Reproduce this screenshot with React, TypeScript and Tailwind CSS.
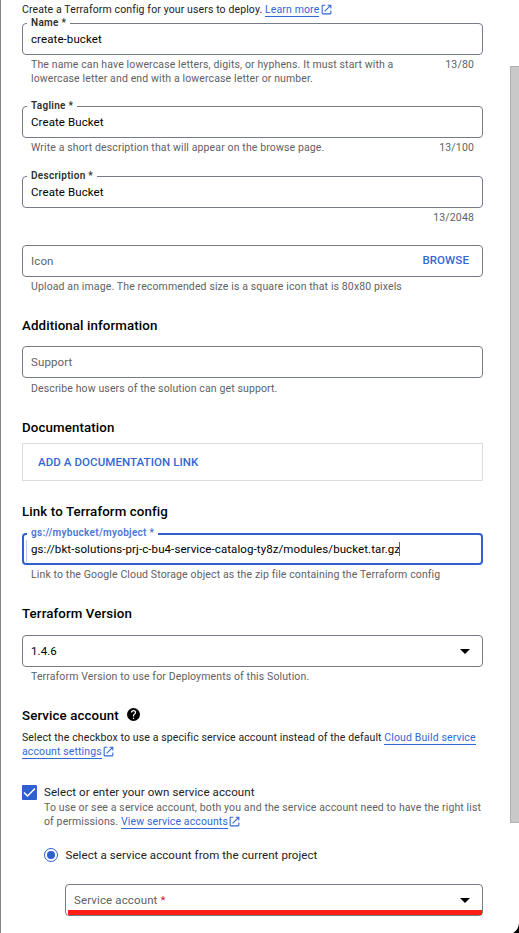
import type { ReactNode } from "react";

function ExternalIcon() {
  return (
    <svg viewBox="0 0 24 24" className="-mt-px ml-[0.5px] inline-block h-[13px] w-[13px] shrink-0 fill-[#3367d6]">
      <path d="M19 19H5V5h5V3H5a2 2 0 0 0-2 2v14a2 2 0 0 0 2 2h14c1.100 0 2-.9 2-2v-5h-2v5zM14 3v2h3.590l-9.830 9.830 1.410 1.410L19 6.410V10h2V3h-7z" />
    </svg>
  );
}

function Link({ children }: { children: ReactNode }) {
  return <a className="inline-block h-[14px] border-b border-[#3367d6] leading-[13px] text-[#3367d6]">{children}</a>;
}

function Heading({ children, className }: { children: ReactNode; className: string }) {
  return (
    <h2 className={`flex h-[18px] items-center pt-[2px] text-[13.3px] font-medium tracking-[0.11px] text-black ${className}`}>
      {children}
    </h2>
  );
}

function Value({ children }: { children: ReactNode }) {
  return <span className="pt-[2px] tracking-[0.09px] text-black">{children}</span>;
}

function Placeholder({ children }: { children: ReactNode }) {
  return <span className="pt-[2px] tracking-[0.13px] text-[#5f6164]">{children}</span>;
}

type FieldProps = {
  label?: string;
  focused?: boolean;
  children?: ReactNode;
  className?: string;
};

function Field({ label, focused, children, className = "" }: FieldProps) {
  return (
    <div
      className={`relative flex h-8 items-center rounded-[4px] text-[11.5px] ${
        focused ? "border-2 border-[#3060cf] pl-[7px]" : "border border-[#767c85] pr-[12px] pl-2"
      } ${className}`}
    >
      {label && (
        <span
          className={`absolute left-[4px] bg-white pr-[4px] pl-[4px] text-[10px] leading-[12px] font-semibold tracking-[0.3px] ${
            focused ? "-top-[8px] -ml-[1px] text-[#4a76d8]" : "-top-[7px] text-[#303030]"
          }`}
        >
          {label}
        </span>
      )}
      {focused && <span className="absolute top-[5px] left-[2px] h-[22px] w-px bg-[#b9cbf2]" />}
      {children}
    </div>
  );
}

function Helper({ children, count }: { children?: ReactNode; count?: string }) {
  return (
    <div className="flex justify-between pt-[3px] pr-[9px] pl-[9px] text-[10.5px] leading-[14px] tracking-[0.126px] text-[#5f6164]">
      <div>{children}</div>
      {count && <div className="tracking-[0.15px]">{count}</div>}
    </div>
  );
}

function Caret() {
  return <span className="ml-auto h-0 w-0 border-x-[5px] border-t-[5px] border-x-transparent border-t-black" />;
}

export default function App() {
  return (
    <div className="relative flex h-[933px] w-[519px] overflow-hidden border-l border-[#858585] bg-white font-[Roboto,sans-serif] text-[11.5px] whitespace-nowrap text-[#202124]">
      <main className="ml-[21px] flex w-[461px] flex-col">
        <p className="flex h-[23px] items-center pb-[3px] text-[10.5px] tracking-[0.12px]">
          Create a Terraform config for your users to deploy.&nbsp;<Link>Learn more</Link>
          <ExternalIcon />
        </p>
        <div className="h-[83px]">
          <Field label="Name *"><Value>create-bucket</Value></Field>
          <Helper count="13/80">
            The name can have lowercase letters, digits, or hyphens. It must start with a
            <br />
            lowercase letter and end with a lowercase letter or number.
          </Helper>
        </div>
        <div className="h-[70px]">
          <Field label="Tagline *"><Value>Create Bucket</Value></Field>
          <Helper count="13/100">Write a short description that will appear on the browse page.</Helper>
        </div>
        <div className="h-[69px]">
          <Field label="Description *"><Value>Create Bucket</Value></Field>
          <Helper count="13/2048" />
        </div>
        <div className="h-[71px]">
          <Field>
            <Placeholder>Icon</Placeholder>
            <span className="mr-px ml-auto font-medium tracking-[0.1px] text-[#3367d6]">BROWSE</span>
          </Field>
          <Helper>Upload an image. The recommended size is a square icon that is 80x80 pixels</Helper>
        </div>
        <Heading className="mb-[12px]">Additional information</Heading>
        <div className="h-[72px]">
          <Field className="mb-px"><Placeholder>Support</Placeholder></Field>
          <Helper>Describe how users of the solution can get support.</Helper>
        </div>
        <Heading className="mb-[7px]">Documentation</Heading>
        <div className="mb-[21px] flex h-[38px] items-center border border-[#dcdcdc] pt-[2px] pl-[15px] font-medium tracking-[0.08px] text-[#3367d6]">
          ADD A DOCUMENTATION LINK
        </div>
        <Heading className="mb-[13px]">Link to Terraform config</Heading>
        <div className="h-[71px]">
          <Field focused label="gs://mybucket/myobject *">
            <Value>gs://bkt-solutions-prj-c-bu4-service-catalog-ty8z/modules/bucket.tar.gz</Value>
            <span className="-ml-px h-[14px] w-px bg-[#3367d6]" />
          </Field>
          <Helper>Link to the Google Cloud Storage object as the zip file containing the Terraform config</Helper>
        </div>
        <Heading className="mb-[13px]">Terraform Version</Heading>
        <div className="h-[71px]">
          <Field><Value>1.4.6</Value><Caret /></Field>
          <Helper>Terraform Version to use for Deployments of this Solution.</Helper>
        </div>
        <Heading className="mb-[7px]">
          Service account
          <svg viewBox="2 2 20 20" className="-mt-[4px] ml-2 h-[13px] w-[13px] fill-black">
            <path d="M12 2a10 10 0 1 0 0 20 10 10 0 0 0 0-20zm1 17h-2v-2h2v2zm2.070-7.750-.9.920C13.450 12.900 13 13.500 13 15h-2v-.5c0-1.100.45-2.100 1.170-2.830l1.240-1.260c.37-.36.59-.86.59-1.410a2 2 0 0 0-4 0H8a4 4 0 1 1 8 0c0 .88-.36 1.680-.93 2.250z" />
          </svg>
        </Heading>
        <div className="mb-[25px] text-[10.5px] leading-[14px] tracking-[0.12px]">
          <div className="flex h-[14px]">Select the checkbox to use a specific service account instead of the default&nbsp;<Link>Cloud Build service</Link></div>
          <div className="flex h-[14px] items-center"><Link>account settings</Link><ExternalIcon /></div>
        </div>
        <div className="flex h-[62px]">
          <span className="mt-px flex h-[15px] w-[15px] items-center justify-center rounded-[1px] bg-[#3060cf]">
            <svg viewBox="0 0 15 15" className="h-[15px] w-[15px] fill-none stroke-white stroke-[1.5]">
              <path d="M2 7.500 5.500 11 13 3.500" />
            </svg>
          </span>
          <div className="ml-[7px]">
            <div className="h-[17px] leading-[16px] tracking-[0.09px]">Select or enter your own service account</div>
            <div className="text-[10.5px] leading-[14px] tracking-[0.124px] text-[#5f6164]">
              <div className="h-[14px]">To use or see a service account, both you and the service account need to have the right list</div>
              <div className="flex h-[14px] items-center">of permissions.&nbsp;<Link>View service accounts</Link><ExternalIcon /></div>
            </div>
          </div>
        </div>
        <div className="mb-[20px] ml-[22px] flex h-[18px] items-center">
          <span className="flex h-[14px] w-[14px] items-center justify-center rounded-full border border-[#3060cf]">
            <span className="h-[8px] w-[8px] rounded-full bg-[#3060cf]" />
          </span>
          <span className="ml-[7.5px] pt-[2px] tracking-[0.08px]">Select a service account from the current project</span>
        </div>
        <Field className="ml-[43px]">
          <Placeholder>Service account <span className="text-[#d02030]">*</span></Placeholder>
          <Caret />
          <span className="absolute bottom-0 left-[2px] h-[5px] w-[414px] bg-[#ff1d17]" />
        </Field>
      </main>
      <div className="mt-[66px] ml-auto h-[757px] w-[9px] border border-r-0 border-[#b0b0b0] bg-[#c9c9c9]" />
      <svg viewBox="0 0 6 10" className="absolute right-0 bottom-0 h-[10px] w-[6px] fill-black">
        <path d="M6 0Q5.500 7 0 10H6Z" />
      </svg>
    </div>
  );
}
